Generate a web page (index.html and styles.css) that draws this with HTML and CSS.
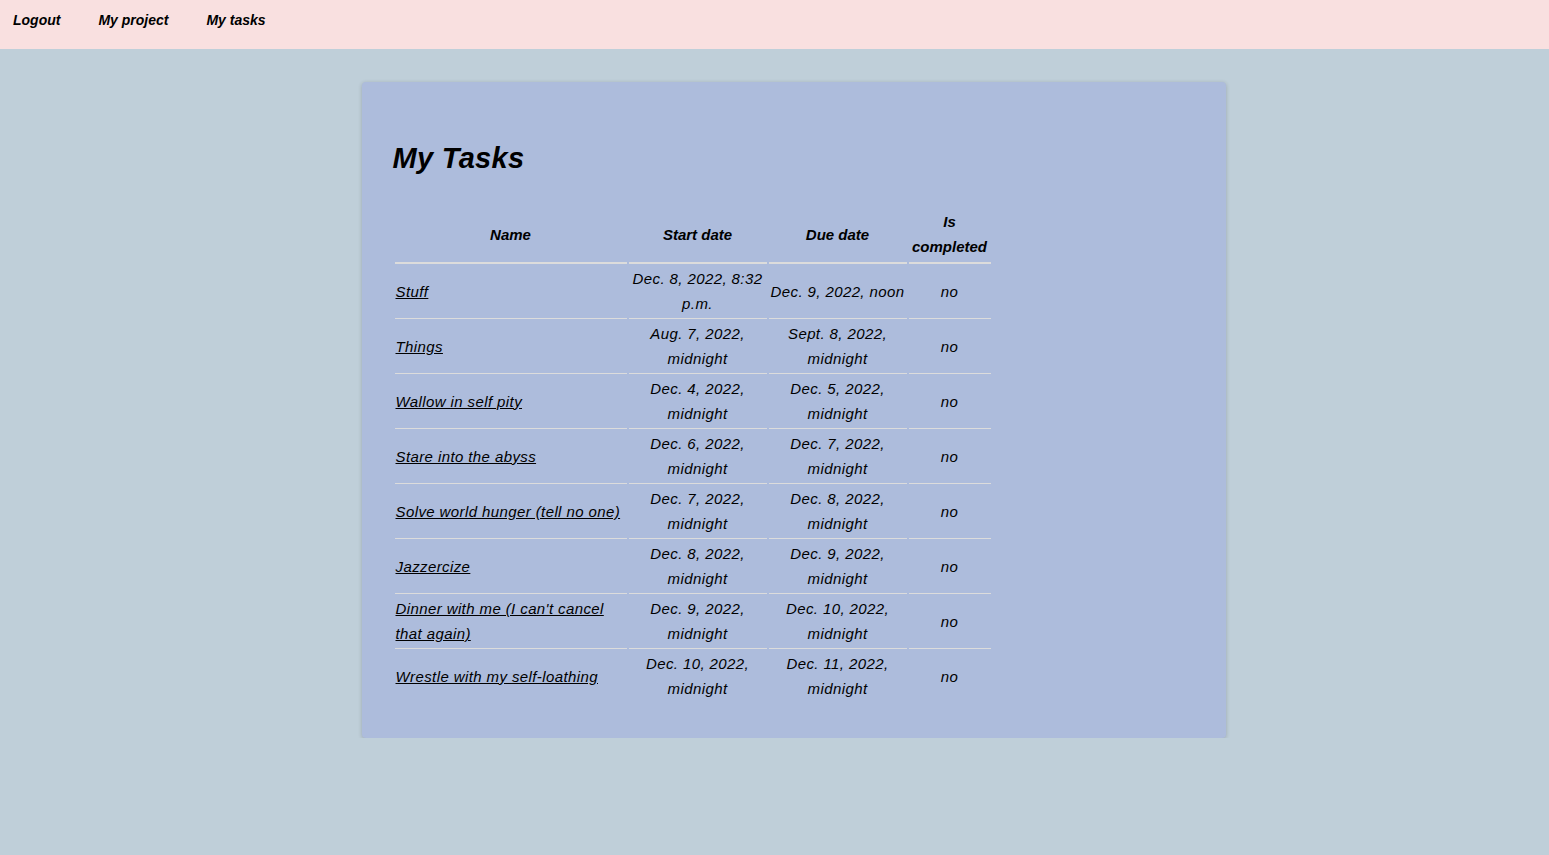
FILE: index.html
```html
<!DOCTYPE html>
<html lang="en">
<head>
<meta charset="utf-8">
<title>My Tasks</title>
<link rel="stylesheet" href="styles.css">
</head>
<body>
<nav class="topnav">
  <a href="#">Logout</a>
  <a href="#">My project</a>
  <a href="#">My tasks</a>
</nav>
<main class="page">
  <section class="card">
    <h1>My Tasks</h1>
    <table class="tasks">
      <colgroup>
        <col class="c-name"><col class="c-date"><col class="c-date"><col class="c-done">
      </colgroup>
      <thead>
        <tr><th>Name</th><th>Start date</th><th>Due date</th><th>Is completed</th></tr>
      </thead>
      <tbody>
        <tr><td class="name"><a href="#">Stuff</a></td><td>Dec. 8, 2022, 8:32 p.m.</td><td>Dec. 9, 2022, noon</td><td>no</td></tr>
        <tr><td class="name"><a href="#">Things</a></td><td>Aug. 7, 2022, midnight</td><td>Sept. 8, 2022, midnight</td><td>no</td></tr>
        <tr><td class="name"><a href="#">Wallow in self pity</a></td><td>Dec. 4, 2022, midnight</td><td>Dec. 5, 2022, midnight</td><td>no</td></tr>
        <tr><td class="name"><a href="#">Stare into the abyss</a></td><td>Dec. 6, 2022, midnight</td><td>Dec. 7, 2022, midnight</td><td>no</td></tr>
        <tr><td class="name"><a href="#">Solve world hunger (tell no one)</a></td><td>Dec. 7, 2022, midnight</td><td>Dec. 8, 2022, midnight</td><td>no</td></tr>
        <tr><td class="name"><a href="#">Jazzercize</a></td><td>Dec. 8, 2022, midnight</td><td>Dec. 9, 2022, midnight</td><td>no</td></tr>
        <tr><td class="name"><a href="#">Dinner with me (I can't cancel that again)</a></td><td>Dec. 9, 2022, midnight</td><td>Dec. 10, 2022, midnight</td><td>no</td></tr>
        <tr><td class="name"><a href="#">Wrestle with my self-loathing</a></td><td>Dec. 10, 2022, midnight</td><td>Dec. 11, 2022, midnight</td><td>no</td></tr>
      </tbody>
    </table>
  </section>
</main>
</body>
</html>
```
FILE: styles.css
```css
html, body {
  margin: 0;
  padding: 0;
}
body {
  background: #bfcfd9;
  font-family: "Liberation Sans", Arial, sans-serif;
  font-style: italic;
  font-size: 15px;
  line-height: 25px;
  color: #000;
}
.topnav {
  background: #f9e0e0;
  height: 49px;
  display: flex;
  align-items: flex-start;
  gap: 38px;
  padding: 8px 13px 0;
  box-sizing: border-box;
}
.topnav a {
  color: #000;
  text-decoration: none;
  font-weight: bold;
  font-size: 14px;
  line-height: 25px;
}
.page {
  display: flex;
  justify-content: center;
  padding-top: 33px;
  padding-left: 38px;
}
.card {
  width: 864px;
  box-sizing: border-box;
  background: #adbcdc;
  border-radius: 4px;
  box-shadow: 0 1px 4px rgba(0, 0, 0, 0.2);
  padding: 32px 32px 33px 31px;
}
.card h1 {
  margin: 20px 0 24px;
  font-size: 29px;
  line-height: 48px;
  font-weight: bold;
  font-style: italic;
  letter-spacing: 0.3px;
}
.tasks {
  border-collapse: separate;
  border-spacing: 2px;
  table-layout: fixed;
  width: 598px;
  letter-spacing: 0.4px;
}
.c-name { width: 232px; }
.c-date { width: 138px; }
.c-done { width: 82px; }
.tasks th {
  font-weight: bold;
  letter-spacing: 0;
  padding: 1px 1px 3px;
  text-align: center;
  vertical-align: middle;
  border-bottom: 2px solid #dcdcdc;
}
.tasks td {
  padding: 0 1px 2px;
  text-align: center;
  vertical-align: middle;
  height: 50px;
  border-bottom: 1px solid #dcdcdc;
}
.tasks tbody tr:last-child td {
  border-bottom: none;
}
.tasks td.name {
  text-align: left;
}
.tasks td.name a {
  color: #000;
  text-decoration: underline;
}
```
